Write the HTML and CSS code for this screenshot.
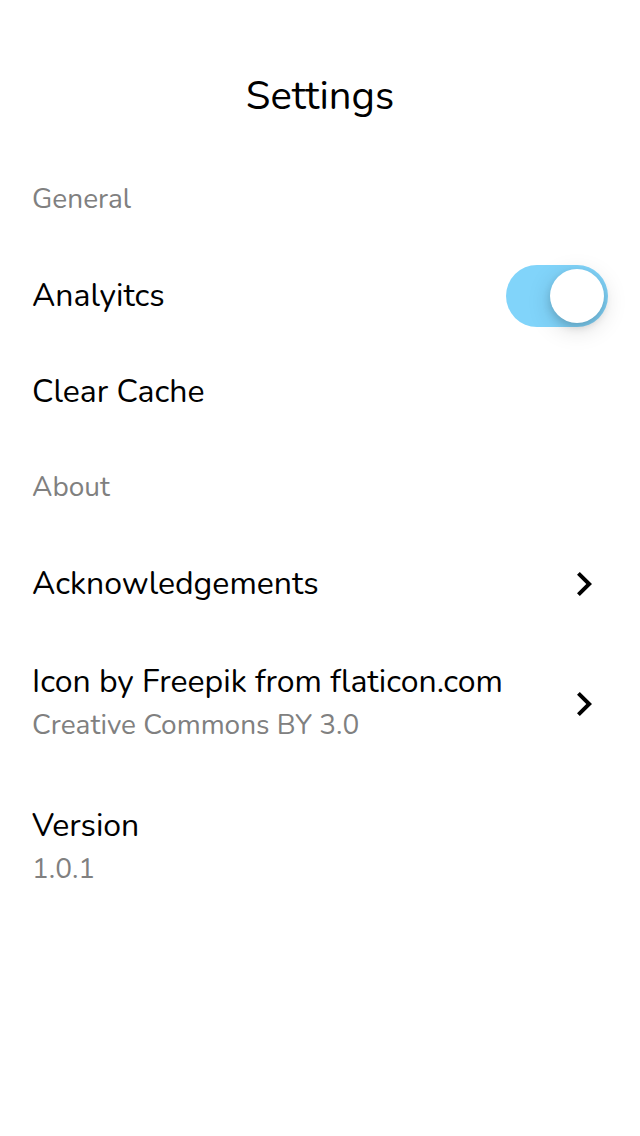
FILE: index.html
```html
<!DOCTYPE html>
<html lang="en">
<head>
<meta charset="utf-8">
<meta name="viewport" content="width=device-width, initial-scale=1">
<title>Settings</title>
<link rel="stylesheet" href="styles.css">
</head>
<body>
<header class="header"><h1 class="title">Settings</h1></header>
<main class="settings">
  <section>
    <h2 class="section-title">General</h2>
    <label class="row" for="analytics">
      <span class="label">Analyitcs</span>
      <input class="switch" id="analytics" type="checkbox" role="switch" checked>
    </label>
    <button class="row" type="button"><span class="label">Clear Cache</span></button>
  </section>
  <section>
    <h2 class="section-title">About</h2>
    <a class="row link" href="#acknowledgements">
      <span class="label">Acknowledgements</span>
      <svg class="chevron" viewBox="0 0 16 24" aria-hidden="true"><path d="M1 2.8L3.8 0L16 12L3.8 24L1 21.2L10.3 12Z"/></svg>
    </a>
    <a class="row link tall" href="#icon">
      <span class="text"><span class="label">Icon by Freepik from flaticon.com</span><span class="detail">Creative Commons BY 3.0</span></span>
      <svg class="chevron" viewBox="0 0 16 24" aria-hidden="true"><path d="M1 2.8L3.8 0L16 12L3.8 24L1 21.2L10.3 12Z"/></svg>
    </a>
    <div class="row tall">
      <span class="text"><span class="label">Version</span><span class="detail">1.0.1</span></span>
    </div>
  </section>
</main>
</body>
</html>
```
FILE: styles.css
```css
* { box-sizing: border-box; }
body {
  margin: 0;
  background: #fff;
  color: #000;
  font-family: Nunito, "Open Sans", sans-serif;
  font-weight: 390;
  font-variant-ligatures: none;
}
.header {
  padding: 68px 32px 28px;
  text-align: center;
}
.title {
  margin: 0;
  font-size: 40px;
  font-weight: inherit;
  line-height: 56px;
}
.section-title {
  margin: 0;
  padding: 25px 32px 27px;
  color: #808080;
  font-size: 28px;
  font-weight: inherit;
  line-height: 44px;
}
.row {
  display: flex;
  align-items: center;
  justify-content: space-between;
  width: 100%;
  min-height: 96px;
  padding: 0 32px;
  border: 0;
  background: none;
  color: inherit;
  font: inherit;
  font-variant-ligatures: none;
  text-align: left;
  text-decoration: none;
}
.link { padding-right: 48px; }
.tall { min-height: 144px; }
.text {
  display: flex;
  flex-direction: column;
}
.label {
  font-size: 32px;
  line-height: 44px;
}
.detail {
  padding-bottom: 2px;
  color: #808080;
  font-size: 28px;
  line-height: 42px;
}
.switch {
  appearance: none;
  width: 102px;
  height: 62px;
  margin: 0;
  padding: 4px;
  border-radius: 31px;
  background: #81d4fa;
}
.switch::before {
  content: "";
  display: block;
  width: 54px;
  height: 54px;
  margin-left: auto;
  border-radius: 50%;
  background: #fff;
  box-shadow: 0 6px 24px rgba(0, 0, 0, 0.15), 0 4px 8px rgba(0, 0, 0, 0.15);
}
.chevron {
  flex: none;
  width: 16px;
  height: 24px;
  fill: #000;
}
```
